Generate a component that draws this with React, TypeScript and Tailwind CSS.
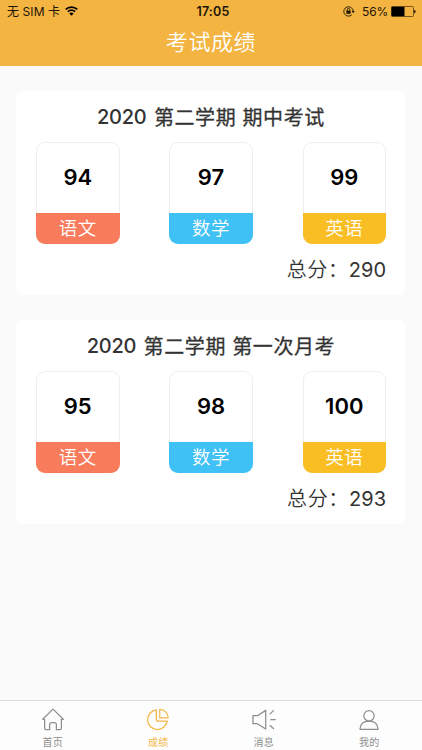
import type { ReactNode } from "react";

type Subject = { name: string; score: number; color: string };
type Exam = { year: string; title: string; total: number; subjects: Subject[] };

const exams: Exam[] = [
  {
    year: "2020",
    title: "第二学期 期中考试",
    total: 290,
    subjects: [
      { name: "语文", score: 94, color: "bg-[#f87b5c]" },
      { name: "数学", score: 97, color: "bg-[#3fc1f5]" },
      { name: "英语", score: 99, color: "bg-[#f8be24]" },
    ],
  },
  {
    year: "2020",
    title: "第二学期 第一次月考",
    total: 293,
    subjects: [
      { name: "语文", score: 95, color: "bg-[#f87b5c]" },
      { name: "数学", score: 98, color: "bg-[#3fc1f5]" },
      { name: "英语", score: 100, color: "bg-[#f8be24]" },
    ],
  },
];

function StatusBar() {
  return (
    <div className="grid h-[22px] grid-cols-3 items-center pl-[7px] pr-[6px] text-[12px] leading-[22px] text-[#1d1608]">
      <div className="flex items-center gap-[5px]">
        <span className="whitespace-pre tracking-[0.1px]">无 SIM 卡</span>
        <svg className="-mt-[2px]" width="13" height="10" viewBox="0 0 13 10" fill="none" stroke="#000" strokeWidth="1.7">
          <path d="M0.7 3.4C4 0.3 9 0.3 12.3 3.4" />
          <path d="M2.8 5.7C5 3.7 8 3.7 10.2 5.7" />
          <path d="M4.3 7.4C5.6 6.3 7.4 6.3 8.7 7.4L6.5 9.7Z" fill="#000" stroke="none" />
        </svg>
      </div>
      <div className="pl-[3px] pt-px text-center text-[12.5px] font-semibold tracking-[0.2px]">17:05</div>
      <div className="flex items-center justify-end">
        <svg className="-mt-[1px] mr-[7px]" width="12" height="11" viewBox="0 0 12 11" fill="none" stroke="currentColor">
          <path d="M8.8 8.8A4.7 4.7 0 1 1 10.2 5.2" strokeWidth="0.9" />
          <path d="M8.6 5H11.8L10.2 7.3Z" fill="currentColor" stroke="none" />
          <rect x="3.4" y="4.6" width="4.2" height="3.2" fill="currentColor" stroke="none" />
          <path d="M4.2 5V3.7a1.3 1.3 0 0 1 2.6 0V5" strokeWidth="0.9" />
        </svg>
        <span className="mr-[3px] tracking-[-0.2px]">56%</span>
        <svg className="-mt-[1px]" width="25" height="11" viewBox="0 0 25 11">
          <rect x="0.5" y="0.5" width="22" height="10" rx="1" fill="none" stroke="#57400f" strokeWidth="0.8" />
          <rect x="0.5" y="0.8" width="13" height="9.4" fill="#000" />
          <path d="M23.2 3.7c1.8 0.5 1.8 3.1 0 3.6z" fill="#000" />
        </svg>
      </div>
    </div>
  );
}

function ScoreTile({ name, score, color }: Subject) {
  return (
    <div className="flex h-[102px] w-[83.5px] flex-col overflow-hidden rounded-[9px] shadow-[inset_0_0_0_1px_#eeeeee]">
      <div className="flex h-[71px] items-center justify-center text-[22px] font-semibold text-black">{score}</div>
      <div className={"flex h-[31px] items-center justify-center pt-px text-[18.5px] font-[350] tracking-[0.6px] text-white " + color}>
        {name}
      </div>
    </div>
  );
}

function ExamCard({ exam }: { exam: Exam }) {
  return (
    <section className="flex h-[203.5px] w-[390px] flex-col rounded-[8px] bg-white px-[20px]">
      <h2 className="flex h-[51px] items-center justify-center gap-[7.5px] whitespace-pre pt-[3px] text-[20px] text-[#333]">
        <span className="pb-[2px] font-medium tracking-[-0.3px]">{exam.year}</span>
        <span className="tracking-[0.6px] [-webkit-text-stroke:0.28px_#333]">{exam.title}</span>
      </h2>
      <div className="flex justify-between">
        {exam.subjects.map((s) => (
          <ScoreTile key={s.name} {...s} />
        ))}
      </div>
      <p className="flex h-[51px] items-center justify-end pt-[2px] text-[20px] text-[#333]">
        <span className="font-[350] tracking-[0.7px]">总分：</span>
        <span>{exam.total}</span>
      </p>
    </section>
  );
}

function Tab({ label, active, children }: { label: string; active?: boolean; children: ReactNode }) {
  return (
    <button className={"flex flex-1 flex-col items-center pt-[6px] " + (active ? "text-[#f3b748]" : "text-[#8e8e8e]")}>
      <svg width="26" height="26" viewBox="0 0 26 26" fill="none" stroke="currentColor" strokeWidth="1.3" strokeLinejoin="round" strokeLinecap="round">
        {children}
      </svg>
      <span className="mt-[3px] text-[10px] leading-[15px] tracking-[0.2px]">{label}</span>
    </button>
  );
}

export default function App() {
  return (
    <div className="flex h-[750px] w-[422px] flex-col bg-[#fafafa] font-['Inter','Noto_Sans_CJK_SC',sans-serif]">
      <header className="h-[65.5px] bg-[#f3b441]">
        <StatusBar />
        <h1 className="text-center text-[22px] font-[350] leading-[40px] tracking-[0.6px] text-white">考试成绩</h1>
      </header>
      <main className="flex flex-1 flex-col items-center gap-[25.5px] pt-[25.5px]">
        {exams.map((e) => (
          <ExamCard key={e.title} exam={e} />
        ))}
      </main>
      <nav className="flex h-[50px] border-t border-[#dcdcdc] bg-[#fdfdfd]">
        <Tab label="首页">
          <path d="M2.3 12.8 13 2.2 23.7 12.8H21.7V22.2Q21.7 23.6 20.3 23.6H16.5V18.2Q16.5 16.2 14.5 16.2H11.5Q9.5 16.2 9.5 18.2V23.6H5.7Q4.3 23.6 4.3 22.2V12.8Z" />
        </Tab>
        <Tab label="成绩" active>
          <path d="M11.3 3.1A10.2 10.2 0 1 0 22.5 14.7H13.3Q11.3 14.7 11.3 12.7Z" />
          <path d="M14.8 2.5A8.8 8.8 0 0 1 23.6 11.3H14.8Z" />
        </Tab>
        <Tab label="消息">
          <path d="M1.5 9H6.1L14.8 3.5V22.9L6.1 17.4H1.5ZM19.4 7.2 22.8 3.8M20 13.2H24.8M19.4 19.2 22.8 22.4" />
        </Tab>
        <Tab label="我的">
          <circle cx="13" cy="9.2" r="5.4" />
          <path d="M3.6 23.2C3.9 17.8 7.5 14.8 13 14.8S22.1 17.8 22.4 23.2Z" />
        </Tab>
      </nav>
    </div>
  );
}
